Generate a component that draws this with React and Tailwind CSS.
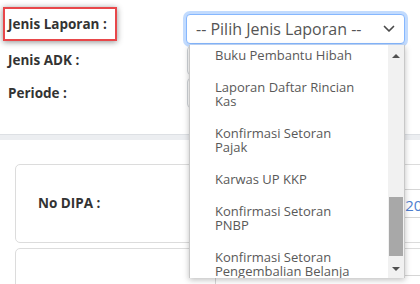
import React from "react";

const items = [
  ["Buku Pembantu Hibah"],
  ["Laporan Daftar Rincian", "Kas"],
  ["Konfirmasi Setoran", "Pajak"],
  ["Karwas UP KKP"],
  ["Konfirmasi Setoran", "PNBP"],
  ["Konfirmasi Setoran", "Pengembalian Belanja"],
];

function Chevron() {
  return (
    <svg width="12" height="8" viewBox="0 0 12 8" fill="none">
      <path d="M1.5 1.5L6 6l4.5-4.5" stroke="#4a4a4a" strokeWidth="1.7" strokeLinecap="round" strokeLinejoin="round" />
    </svg>
  );
}

function Dropdown() {
  return (
    <div className="absolute left-[189px] top-[45px] flex h-[233px] w-[216px] overflow-hidden border-l border-r border-[#c8c8c8] bg-white shadow-[0_2px_6px_rgba(0,0,0,0.25)]">
      <div className="flex-1 overflow-hidden">
        <div className="-mt-[6px]">
          {items.map((lines, i) => (
            <div key={i} className="py-[9px] pl-[25px] text-[13px] leading-[14px] text-[#595959]">
              {lines.map((l) => (
                <div key={l} className="whitespace-nowrap">{l}</div>
              ))}
            </div>
          ))}
        </div>
      </div>
      <div className="relative w-[16px] bg-[#f1f1f1]">
        <div className="absolute left-[4px] top-[9px] h-0 w-0 border-x-[4px] border-b-[4px] border-x-transparent border-b-[#505050]" />
        <div className="absolute left-[1px] top-[152px] h-[59px] w-[14px] bg-[#a8a8a8]" />
        <div className="absolute left-[4px] top-[222px] h-0 w-0 border-x-[4px] border-t-[4px] border-x-transparent border-t-[#505050]" />
      </div>
    </div>
  );
}

export default function App() {
  return (
    <div className="relative h-[284px] w-[420px] overflow-hidden bg-white font-['Open_Sans',sans-serif]">
      <div className="h-[134px]">
        <div className="flex h-[45px]">
          <div className="w-[186px]">
            <div className="ml-[3px] mt-[7px] inline-flex h-[34px] items-center border-2 border-[#e8474a] pl-[3px] pr-[8px] text-[13.5px] font-bold text-[#333] shadow-[0_1px_6px_rgba(0,0,0,0.45)]">
              Jenis Laporan :
            </div>
          </div>
          <div className="mt-[14px] flex h-[30px] w-[219px] items-center justify-between rounded-[4px] border border-[#86b7fe] bg-white pl-[9px] pr-[9px] text-[16px] text-[#555] shadow-[0_0_0_3px_rgba(13,110,253,0.25)]">
            <span>-- Pilih Jenis Laporan --</span>
            <Chevron />
          </div>
        </div>
        <div className="flex h-[31px] items-center">
          <div className="w-[187px] pl-[8px] text-[13.5px] font-bold text-[#333]">Jenis ADK :</div>
          <div className="h-[29px] w-[200px] rounded-[4px] border border-[#d0d4d8]" />
        </div>
        <div className="flex h-[34px] items-center">
          <div className="w-[187px] pl-[8px] text-[13.5px] font-bold text-[#333]">Periode :</div>
          <div className="h-[30px] w-[200px] rounded-[4px] border border-[#d0d4d8]" />
        </div>
      </div>
      <div className="h-[6px] border-t border-[#dde0e4] bg-[#eceef1]" />
      <div className="pl-[15px] pt-[24px]">
        <div className="flex h-[79px] w-[430px] items-center rounded-[5px] border border-[#dcdcdc]">
          <div className="w-[199px] pl-[22px] text-[13.5px] font-bold text-[#333]">No DIPA :</div>
          <div className="flex h-[29px] flex-1 items-center border border-[#d6d6d6] pl-[172px] pt-[3px] text-[15px] text-[#4f7fcf]">2020</div>
        </div>
        <div className="mt-[5px] h-[60px] w-[430px] rounded-[5px] border border-[#dcdcdc] pl-[29px] pt-[26px]">
          <div className="flex items-center">
            <div className="w-[170px] text-[13.5px] font-bold text-[#333]">Program :</div>
            <div className="h-[29px] flex-1 border border-[#d6d6d6]" />
          </div>
        </div>
      </div>
      <Dropdown />
    </div>
  );
}
